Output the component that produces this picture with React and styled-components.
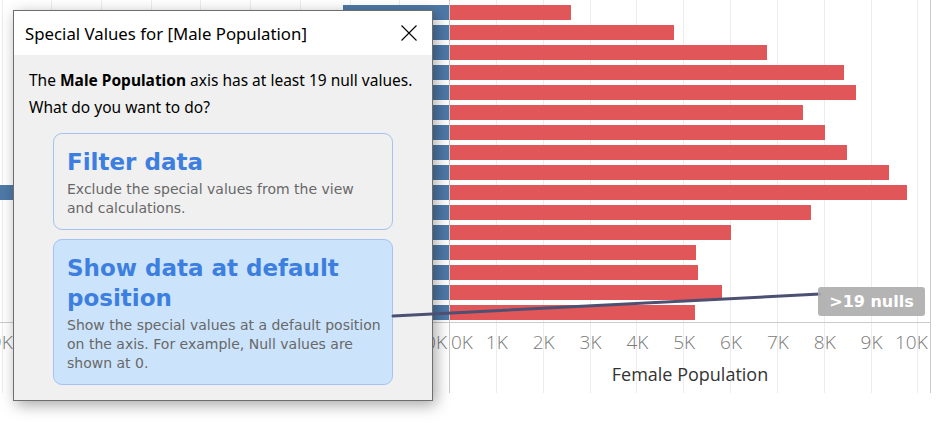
import React from 'react';
import styled, { createGlobalStyle } from 'styled-components';

const GlobalStyle = createGlobalStyle`
  html, body {
    margin: 0;
    padding: 0;
    background: #fff;
  }
  body {
    font-family: "Noto Sans", sans-serif;
  }
`;

const Page = styled.div`
  position: relative;
  width: 938px;
  height: 439px;
  overflow: hidden;
  background: #fff;
`;

const Chart = styled.div`
  display: flex;
  height: 393px;
`;

const Pane = styled.div`
  box-sizing: border-box;
  flex: none;
  width: ${p => p.$width}px;
  border-right: 1px solid #cbcbcb;
  display: flex;
  flex-direction: column;
  background-image: repeating-linear-gradient(
    ${p => p.$dir},
    transparent 0 ${p => p.$step - 1}px,
    #ededed ${p => p.$step - 1}px ${p => p.$step}px
  );
`;

const BarArea = styled.div`
  box-sizing: border-box;
  height: 323px;
  padding-top: 5px;
  border-bottom: 1px solid #cbcbcb;
  display: flex;
  flex-direction: column;
  gap: 5px;
  overflow: hidden;
`;

const BarRow = styled.div`
  height: 15px;
  flex: none;
  display: flex;
  justify-content: ${p => (p.$reverse ? 'flex-end' : 'flex-start')};
`;

const Bar = styled.div`
  flex: none;
  height: 100%;
  background: ${p => p.$color};
`;

const Ticks = styled.div`
  display: flex;
  flex-direction: ${p => (p.$reverse ? 'row-reverse' : 'row')};
  height: 26px;
  margin-top: 6px;
  font-family: "Open Sans", sans-serif;
  font-weight: 300;
  font-size: 19px;
  line-height: 26px;
  color: #7a7a7a;
  white-space: nowrap;
`;

const Tick = styled.div`
  box-sizing: border-box;
  flex: ${p => (p.$fill ? '1 1 auto' : 'none')};
  width: ${p => (p.$fill ? 'auto' : `${p.$w}px`)};
  text-align: ${p => p.$align || 'center'};
  padding: 0 ${p => p.$padR || 0}px 0 ${p => p.$padL || 0}px;
`;

const AxisTitle = styled.div`
  margin-top: 7px;
  text-align: center;
  font-family: "Open Sans", sans-serif;
  font-weight: 500;
  font-size: 18px;
  line-height: 24px;
  color: #333;
`;

const Dialog = styled.div`
  position: absolute;
  left: 13px;
  top: 10px;
  width: 420px;
  box-sizing: border-box;
  border: 1px solid #6e6e6e;
  background: #f0f0f0;
  box-shadow: 3px 4px 14px rgba(0, 0, 0, 0.35);
`;

const TitleBar = styled.div`
  height: 44px;
  background: #fff;
  display: flex;
  align-items: center;
  justify-content: space-between;
  padding: 0 15px 0 11px;
  font-family: "Noto Sans", sans-serif;
  font-size: 16.8px;
  color: #000;
`;

const CloseIcon = styled.svg`
  display: block;
  width: 16px;
  height: 16px;
`;

const Body = styled.div`
  padding: 15px;
  font-family: "Noto Sans", sans-serif;
  font-size: 15.5px;
  line-height: 21px;
  color: #000;
`;

const Prompt = styled.p`
  margin: 0 0 ${p => p.$gap}px;
`;

const Option = styled.div`
  margin: 0 24px;
  border: 1px solid #a4c2f2;
  border-radius: 9px;
  background: ${p => (p.$selected ? '#cce4fb' : 'transparent')};
  padding: 13px 8px 11px 13px;

  & + & {
    margin-top: 9px;
  }
`;

const OptionTitle = styled.div`
  font-family: "DejaVu Sans", sans-serif;
  font-weight: 700;
  font-size: 23px;
  line-height: 30px;
  color: #3d7fe0;
`;

const OptionText = styled.div`
  margin-top: 3px;
  font-family: "DejaVu Sans", sans-serif;
  font-size: 14px;
  line-height: 19px;
  color: #686868;
`;

const Annotation = styled.svg`
  position: absolute;
  left: 0;
  top: 0;
  width: 938px;
  height: 439px;
  pointer-events: none;
`;

const Badge = styled.div`
  position: absolute;
  left: 818px;
  top: 287px;
  width: 107px;
  height: 29px;
  border-radius: 3px;
  background: rgba(172, 172, 172, 0.9);
  color: #fff;
  font-family: "DejaVu Sans", sans-serif;
  font-weight: 700;
  font-size: 16px;
  line-height: 29px;
  text-align: center;
`;

const female = [121, 224, 317, 394, 406, 353, 375, 397, 439, 457, 361, 281, 246, 248, 272, 245];
const male = [106, 300, 260, 340, 380, 310, 360, 400, 420, 449, 330, 280, 240, 250, 270, 230];

const BLUE = '#4e79a7';
const RED = '#e15759';

const App = () => (
  <Page>
    <GlobalStyle />
    <Chart>
      <Pane $width={450} $dir="to left" $step={49.7}>
        <BarArea>
          {male.map((w, i) => (
            <BarRow key={i} $reverse>
              <Bar $color={BLUE} style={{ width: w }} />
            </BarRow>
          ))}
        </BarArea>
        <Ticks $reverse>
          <Tick $w={24.85} $align="right" $padR={2}>0K</Tick>
          {[1, 2, 3, 4, 5, 6, 7, 8, 9].map(k => (
            <Tick key={k} $w={49.7}>{k}K</Tick>
          ))}
        </Ticks>
        <AxisTitle>Male Population</AxisTitle>
      </Pane>
      <Pane $width={481} $dir="to right" $step={46.85}>
        <BarArea>
          {female.map((w, i) => (
            <BarRow key={i}>
              <Bar $color={RED} style={{ width: w }} />
            </BarRow>
          ))}
        </BarArea>
        <Ticks>
          <Tick $w={23.4} $align="left" $padL={1}>0K</Tick>
          {[1, 2, 3, 4, 5, 6, 7, 8, 9].map(k => (
            <Tick key={k} $w={46.85}>{k}K</Tick>
          ))}
          <Tick $fill $align="right" $padR={3}>10K</Tick>
        </Ticks>
        <AxisTitle>Female Population</AxisTitle>
      </Pane>
    </Chart>

    <Dialog>
      <TitleBar>
        <span>Special Values for [Male Population]</span>
        <CloseIcon viewBox="0 0 16 16">
          <path d="M0.5 0.5 L15.5 15.5 M15.5 0.5 L0.5 15.5" stroke="#000" strokeWidth="1.1" fill="none" />
        </CloseIcon>
      </TitleBar>
      <Body>
        <Prompt $gap={6}>
          The <b>Male Population</b> axis has at least 19 null values.
        </Prompt>
        <Prompt $gap={15}>What do you want to do?</Prompt>
        <Option>
          <OptionTitle>Filter data</OptionTitle>
          <OptionText>
            Exclude the special values from the view
            <br />
            and calculations.
          </OptionText>
        </Option>
        <Option $selected>
          <OptionTitle>
            Show data at default
            <br />
            position
          </OptionTitle>
          <OptionText>
            Show the special values at a default position
            <br />
            on the axis. For example, Null values are
            <br />
            shown at 0.
          </OptionText>
        </Option>
      </Body>
    </Dialog>

    <Annotation viewBox="0 0 938 439">
      <line x1="393" y1="316" x2="820" y2="294" stroke="#4c5072" strokeWidth="3" strokeLinecap="round" />
    </Annotation>
    <Badge>&gt;19 nulls</Badge>
  </Page>
);

export default App;
